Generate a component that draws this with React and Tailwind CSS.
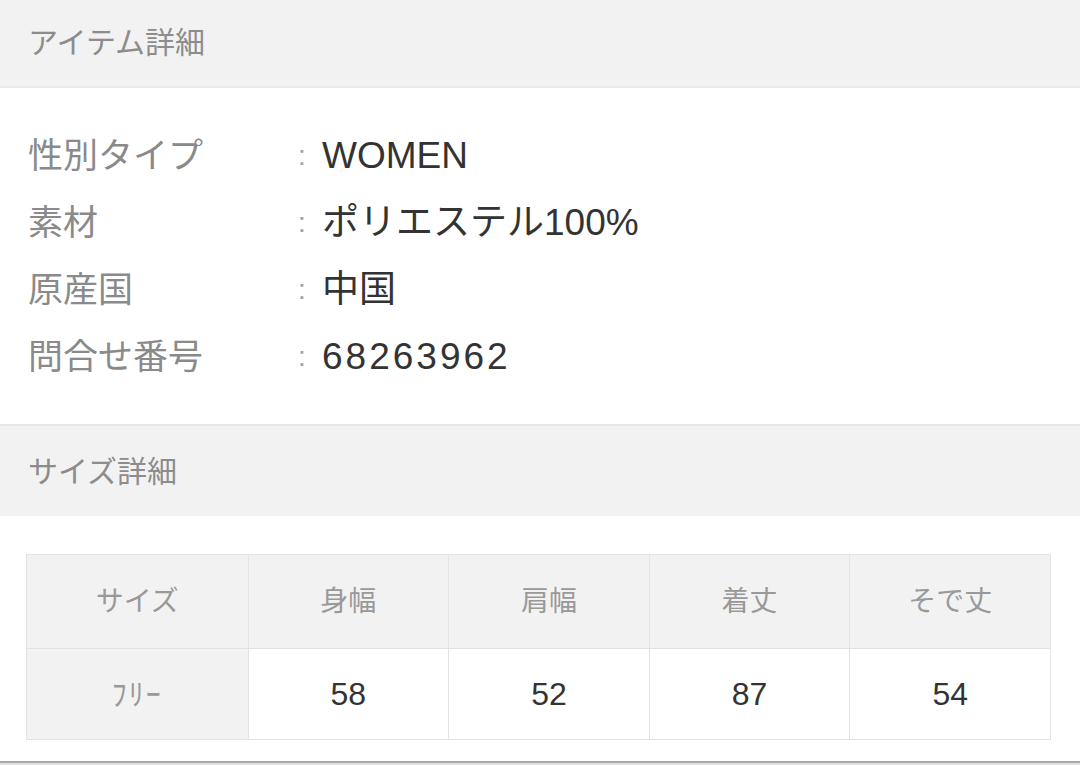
import React from "react";

const items = [
  { label: "性別タイプ", value: "WOMEN" },
  { label: "素材", value: "ポリエステル100%" },
  { label: "原産国", value: "中国" },
  { label: "問合せ番号", value: "68263962", wide: true },
];

const sizeHeads = ["サイズ", "身幅", "肩幅", "着丈", "そで丈"];
const sizeRow = ["58", "52", "87", "54"];

const font = { fontFamily: '"Liberation Sans", "Noto Sans CJK JP", sans-serif' };

const SectionHead = ({ title, className = "" }) => (
  <div className={"flex items-center bg-[#f2f2f2] pl-[28px] text-[30px] text-[#8c8c8c] " + className}>
    {title}
  </div>
);

const App = () => {
  return (
    <div className="w-[1080px] h-[765px] bg-white overflow-hidden flex flex-col" style={font}>
      <SectionHead title="アイテム詳細" className="h-[88px] pb-[2px] border-b-2 border-[#e9e9e9]" />

      {/* item details */}
      <div className="pt-[34px] pb-[34px] pl-[28px]">
        {items.map((it) => (
          <div key={it.label} className="flex items-center h-[67px]">
            <div className="w-[270px] text-[35px] text-[#8a8a8a] leading-none">{it.label}</div>
            <div className="w-[24px] text-[28px] text-[#a0a0a0] leading-none">:</div>
            <div className={"text-[37px] text-[#333] leading-none " + (it.wide ? "tracking-[3px]" : "")}>
              {it.value}
            </div>
          </div>
        ))}
      </div>

      <SectionHead title="サイズ詳細" className="h-[92px] border-t-2 border-[#e6e6e6]" />

      {/* size table */}
      <div className="pt-[38px] pl-[26px]">
        <div className="w-[1025px] border border-[#e3e3e3]">
          <div className="flex h-[93px] bg-[#f2f2f2]">
            {sizeHeads.map((h, i) => (
              <div
                key={h}
                className={
                  (i === 0 ? "w-[221px]" : "w-[201px] border-l border-[#e3e3e3]") +
                  " flex items-center justify-center text-[28px] text-[#999]"
                }
              >
                {h}
              </div>
            ))}
          </div>
          <div className="flex h-[91px] border-t border-[#e3e3e3]">
            <div className="w-[221px] bg-[#f2f2f2] flex items-center justify-center text-[30px] tracking-[2px] text-[#999]">
              ﾌﾘｰ
            </div>
            {sizeRow.map((v, i) => (
              <div
                key={i}
                className="w-[201px] border-l border-[#e3e3e3] flex items-center justify-center text-[32px] text-[#333]"
              >
                {v}
              </div>
            ))}
          </div>
        </div>
      </div>

      <div className="mt-auto h-[4px] border-t-2 border-[#a9a9a9] bg-[#e0e0e0]" />
    </div>
  );
};

export default App;
